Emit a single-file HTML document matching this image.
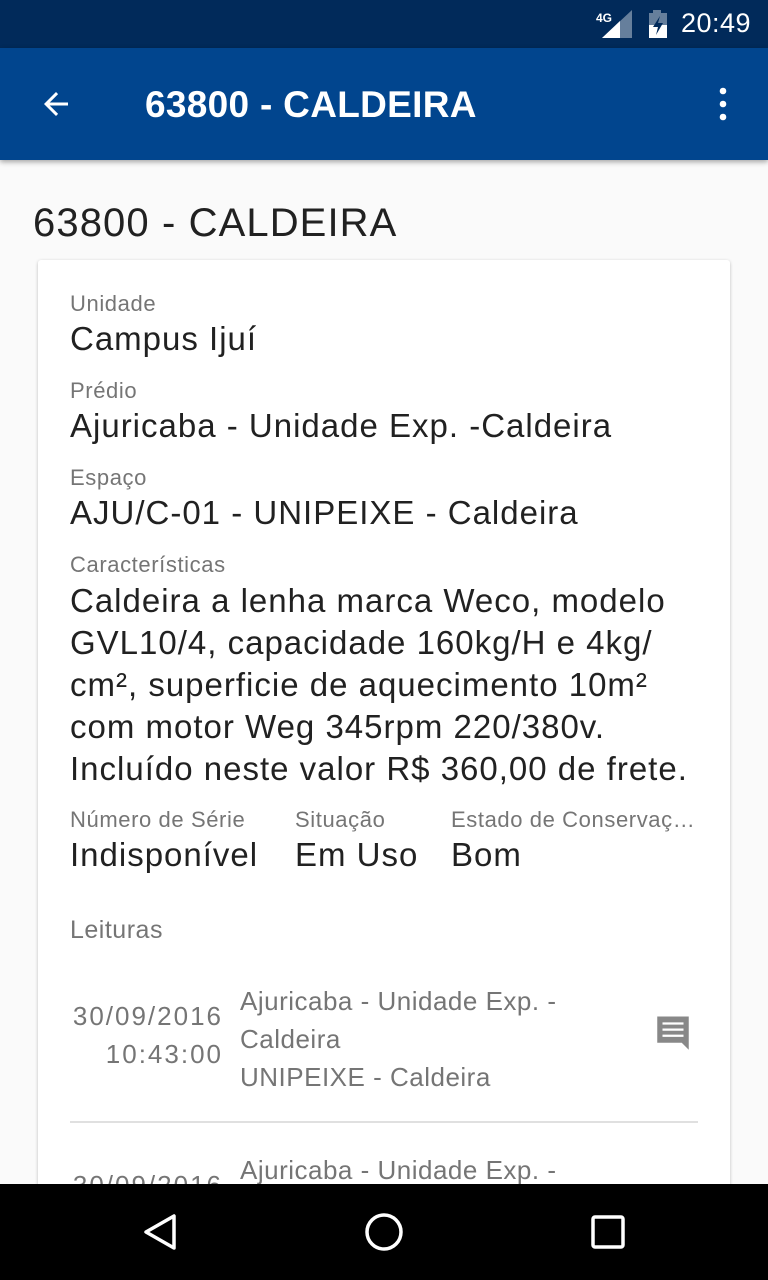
<!DOCTYPE html>
<html><head><meta charset="utf-8"><style>
*{margin:0;padding:0;box-sizing:border-box}
body{width:768px;height:1280px;overflow:hidden;background:#fafafa;font-family:"Liberation Sans",Roboto,sans-serif;position:relative}
.a{position:absolute;white-space:nowrap}
.lbl{font-size:22px;color:#757575;letter-spacing:.6px}
.val{font-size:33px;color:#212121;letter-spacing:1px}
.g{font-size:26px;color:#757575;letter-spacing:.5px}
</style></head><body>
<div class="a" style="left:0;top:0;width:768px;height:48px;background:#012a5a"></div>
<svg class="a" style="left:596px;top:10px" width="36" height="30"><text x="0" y="12" font-size="12" font-weight="bold" fill="#fff" font-family="Liberation Sans">4G</text><polygon points="6,28 36,0 36,28" fill="#fff" opacity=".4"/><polygon points="6,28 24,11 24,28" fill="#fff"/></svg>
<svg class="a" style="left:647px;top:10px" width="22" height="28"><rect x="6" y="0" width="8" height="3" fill="#fff" opacity=".4"/><rect x="2" y="3" width="18" height="25" fill="#fff" opacity=".4"/><rect x="2" y="15" width="18" height="13" fill="#fff"/><polygon points="13,6 6,17 11,17 9,25 16,13 11,13" fill="#012a5a"/></svg>
<div class="a" style="left:681px;top:8px;font-size:27px;color:#fff;letter-spacing:.5px">20:49</div>
<div class="a" style="left:0;top:48px;width:768px;height:112px;background:#01458e;box-shadow:0 2px 5px rgba(0,0,0,.35)"></div>
<svg class="a" style="left:38px;top:86px" width="36" height="36" viewBox="0 0 24 24"><path d="M20 11H7.8l5.6-5.6L12 4l-8 8 8 8 1.4-1.4L7.8 13H20z" fill="#fff"/></svg>
<div class="a" style="left:145px;top:84px;font-size:37px;color:#fff;font-weight:bold;letter-spacing:.3px">63800 - CALDEIRA</div>
<svg class="a" style="left:718px;top:86px" width="10" height="36"><circle cx="5" cy="5" r="3.3" fill="#fff"/><circle cx="5" cy="18" r="3.3" fill="#fff"/><circle cx="5" cy="31" r="3.3" fill="#fff"/></svg>
<div class="a" style="left:33px;top:201px;font-size:40px;color:#212121;letter-spacing:1.1px">63800 - CALDEIRA</div>
<div class="a" style="left:38px;top:260px;width:692px;height:1000px;background:#fff;border-radius:3px;box-shadow:0 1px 3px rgba(0,0,0,.25)"></div>
<div class="a lbl" style="left:70px;top:291px">Unidade</div>
<div class="a val" style="left:70px;top:320px">Campus Ijuí</div>
<div class="a lbl" style="left:70px;top:378px">Prédio</div>
<div class="a val" style="left:70px;top:407px">Ajuricaba - Unidade Exp. -Caldeira</div>
<div class="a lbl" style="left:70px;top:465px">Espaço</div>
<div class="a val" style="left:70px;top:494px">AJU/C-01 - UNIPEIXE - Caldeira</div>
<div class="a lbl" style="left:70px;top:552px">Características</div>
<div class="a val" style="left:70px;top:580px;line-height:42px">Caldeira a lenha marca Weco, modelo<br>GVL10/4, capacidade 160kg/H e 4kg/<br>cm², superficie de aquecimento 10m²<br>com motor Weg 345rpm 220/380v.<br>Incluído neste valor R$ 360,00 de frete.</div>
<div class="a lbl" style="left:70px;top:807px">Número de Série</div>
<div class="a val" style="left:70px;top:836px">Indisponível</div>
<div class="a lbl" style="left:295px;top:807px">Situação</div>
<div class="a val" style="left:295px;top:836px">Em Uso</div>
<div class="a lbl" style="left:451px;top:807px;width:246px;overflow:hidden;text-overflow:ellipsis">Estado de Conservação</div>
<div class="a val" style="left:451px;top:836px">Bom</div>
<div class="a g" style="left:70px;top:916px;font-size:25px">Leituras</div>
<div class="a g" style="left:60px;top:997px;width:163px;text-align:right;line-height:38px;letter-spacing:2px">30/09/2016<br>10:43:00</div>
<div class="a g" style="left:240px;top:982px;line-height:38px">Ajuricaba - Unidade Exp. -<br>Caldeira<br>UNIPEIXE - Caldeira</div>
<svg class="a" style="left:652px;top:1013px" width="42" height="42" viewBox="0 0 24 24"><path d="M21 2H3v15h14l4 4z" fill="#888"/><path d="M6 6h12M6 9.5h12M6 13h12" stroke="#fff" stroke-width="1.3"/></svg>
<div class="a" style="left:70px;top:1121px;width:628px;height:2px;background:#e0e0e0"></div>
<div class="a g" style="left:60px;top:1170px;width:163px;text-align:right;letter-spacing:2px">30/09/2016</div>
<div class="a g" style="left:240px;top:1155px">Ajuricaba - Unidade Exp. -</div>
<div class="a" style="left:0;top:1184px;width:768px;height:96px;background:#000"></div>
<svg class="a" style="left:140px;top:1212px" width="40" height="40"><polygon points="34,4 34,36 6,20" fill="none" stroke="#fff" stroke-width="3.5" stroke-linejoin="round"/></svg>
<svg class="a" style="left:364px;top:1212px" width="40" height="40"><circle cx="20" cy="20" r="17" fill="none" stroke="#fff" stroke-width="3.5"/></svg>
<svg class="a" style="left:590px;top:1214px" width="36" height="36"><rect x="3" y="3" width="30" height="30" rx="2" fill="none" stroke="#fff" stroke-width="3.5"/></svg>
</body></html>
